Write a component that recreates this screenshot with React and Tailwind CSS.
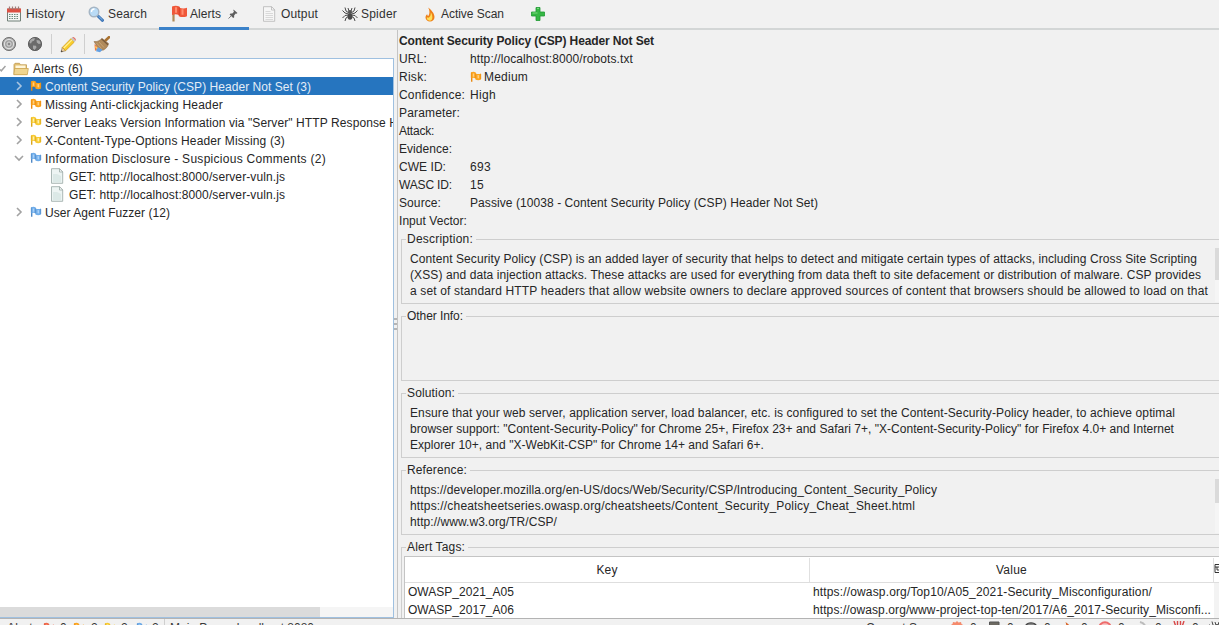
import React, { useLayoutEffect, useRef } from "react";

// Text stretched or tightened to a known width through letter spacing.
function T({ w, className = "", children }) {
  const ref = useRef(null);
  useLayoutEffect(() => {
    const el = ref.current;
    el.style.letterSpacing = "0px";
    const n = el.textContent.length;
    el.style.letterSpacing = (w - el.getBoundingClientRect().width) / n + "px";
  }, [w]);
  return <span ref={ref} className={"inline-block shrink-0 whitespace-pre " + className}>{children}</span>;
}

function Flag({ c, d, l, className = "h-3 w-3" }) {
  return (
    <svg viewBox="0 0 12 12" className={"shrink-0 " + className}>
      <path d="M1.700 1.500v9.300" stroke={d} strokeWidth="1.400" />
      <path d="M1 1.500c1.600-.9 3.200-.9 4.800 0v1c1.500.8 3.600.8 5.200 0v6c-1.600 1-4 1-5.600 0V7.300c-1.300-.7-2.900-.7-4.400 0z" fill={c} />
      <path d="M2.800 2.600c.6-.2 1-.2 1.500 0v3.300c-.5-.2-1-.2-1.500 0zM7.500 4.100c.6.1 1.100.1 1.600 0v3.200c-.5.1-1 .1-1.600 0z" fill={l} />
      <path d="M5.400 2.400v5M1.300 1.700v5M10.700 3v5" stroke={d} strokeWidth=".7" />
    </svg>
  );
}

function Calendar() {
  return (
    <svg viewBox="0 0 16 16" className="h-4 w-4">
      <path d="M1.500 3h13v12h-13z" fill="#f4f6f5" stroke="#718078" />
      <path d="M1 2.500h14v4H1z" fill="#dc5044" />
      <path d="M3.500.5v3M6.500.5v3M9.500.5v3M12.500.5v3" stroke="#a07a76" strokeWidth="1.200" />
      <path d="M3 8.500h10M3 10.500h10M3 12.500h10" stroke="#6d8a7e" strokeDasharray="1.500 1" strokeWidth="1.100" />
    </svg>
  );
}
function Magnifier() {
  return (
    <svg viewBox="0 0 16 16" className="h-4 w-4">
      <path d="M10 10l4.500 4.300" stroke="#3e76b8" strokeWidth="3" strokeLinecap="round" />
      <path d="M10.500 10.200l4 3.800" stroke="#8bbce6" strokeWidth="1" />
      <circle cx="6" cy="6" r="4.800" fill="#b9dbf6" stroke="#a5b5c4" strokeWidth="1.400" />
      <path d="M3.500 6c0-2 1.500-3 3-3" stroke="#fff" fill="none" strokeWidth="1.300" />
    </svg>
  );
}
function RedFlag() {
  return (
    <svg viewBox="0 0 17 17" className="h-[17px] w-[17px]">
      <path d="M2.500 9v7.500" stroke="#b08a58" strokeWidth="2.200" />
      <path d="M1 1.500c2.500-1 5-1 7.500.1v1.100c2.300 1 5 1 7.500.1v8.400c-2.700 1.200-5.700 1.200-8.200 0V10c-2-1-4.300-1-6.800 0z" fill="#f0583a" />
      <path d="M5 2.300v5.500M11.500 4.300v5.500" stroke="#ff8e70" strokeWidth="2" />
      <path d="M8.200 2v8.500" stroke="#d23c22" strokeWidth=".9" />
    </svg>
  );
}
function Pin() {
  return (
    <svg viewBox="0 0 10 10" className="h-[10px] w-[10px]">
      <path d="M5.500.5l4 3.500-1 .8-.8-.2-1.600 1.900.1 1.700-1 .8L1.600 5.500l.9-1 1.800.1L6 2.800l-.6-1z" fill="#5d5d5d" />
      <path d="M3.500 6.600L.5 9.500" stroke="#777" />
    </svg>
  );
}
function Doc({ lines }) {
  return (
    <svg viewBox="0 0 14 16" className="h-4 w-[14px]">
      <path d="M1.500.7h8L12.700 4v11.300H1.500z" fill={lines ? "#f6f6f6" : "#edf4f3"} stroke={lines ? "#bcbcbc" : "#a3b0ae"} strokeWidth=".9" />
      <path d="M9.500.7V4h3.200z" fill="#fff" stroke={lines ? "#b8b8b8" : "#9aa9a6"} strokeWidth=".8" />
      {lines ? (
        <path d="M3.500 5.500h5M3.500 7.500h7.500M3.500 9.500h7.500M3.500 11.500h7.500M3.500 13.500h7.500" stroke="#d2d2d2" strokeWidth=".8" />
      ) : (
        <path d="M3 6h4l4 2v6H3z" fill="#dce9e7" />
      )}
    </svg>
  );
}
function Spider() {
  return (
    <svg viewBox="0 0 16 16" className="h-4 w-4">
      <g fill="none" stroke="#4a4a4a" strokeWidth="1">
        <path d="M7 7L4 5 3 1.500M9 7l3-2 1-3.500M6.500 8L3 7 .5 4.500M9.500 8L13 7l2.500-2.500M6.500 9L3 9.500.5 12M9.500 9l3.500.5 2.500 2.500M7 10l-3 2-1 3M9 10l3 2 1 3M7 5L6 2M9 5l1-3" />
      </g>
      <ellipse cx="8" cy="10.500" rx="2.400" ry="3.300" fill="#4a4a4a" />
      <circle cx="8" cy="6" r="2" fill="#555" />
    </svg>
  );
}
function Flame() {
  return (
    <svg viewBox="0 0 10 15" className="h-[15px] w-[10px]">
      <path d="M3.200.5C6.500 3 9.500 6.500 9.500 10c0 2.800-2 4.500-4.500 4.500S.5 12.800.5 10.500c0-1.600.8-2.600 1.800-3.300 0 1 .3 1.600 1 1.800C5 6.500 4.800 3.500 3.200.5z" fill="#ee8018" />
      <path d="M5.800 5.500c2 2.500 2.500 8-.9 8.200-2.400.1-3.500-1.700-3-3.400.8.600 1.900.7 2.600-.2.900-1.100 1.400-2.500 1.300-4.600z" fill="#ffdf5a" />
    </svg>
  );
}
function Plus() {
  return (
    <svg viewBox="0 0 14 14" className="h-[14px] w-[14px]">
      <path d="M5 .5h4V5h4.500v4H9v4.500H5V9H.5V5H5z" fill="#36b744" stroke="#209a34" strokeWidth=".8" />
      <path d="M6 1.500h2M1.500 6h5" stroke="#7bdc7f" />
    </svg>
  );
}
function Target() {
  return (
    <svg viewBox="0 0 16 16" className="h-4 w-4">
      <circle cx="8" cy="8" r="6.600" fill="#a3a3a3" stroke="#767676" />
      <circle cx="8" cy="8" r="4.600" fill="none" stroke="#e0e0e0" strokeWidth="1.100" />
      <circle cx="8" cy="8" r="2" fill="#8a8a8a" stroke="#dcdcdc" />
    </svg>
  );
}
function Globe() {
  return (
    <svg viewBox="0 0 16 16" className="h-4 w-4">
      <circle cx="8" cy="8" r="6.600" fill="#6b6b6b" stroke="#5f5f5f" />
      <path d="M3 4.500c1.500-2 3.500-2.500 5-2l-1 2.300-2 .7-1 2-1.500-.5zM9.500 4l3 .5 1.300 3-2 .5-2-1.500zM6 9.500l3 .3.500 1.700-2 2.500-1.500-1.500z" fill="#a9a9a9" />
    </svg>
  );
}
function Pencil() {
  return (
    <svg viewBox="0 0 17 17" className="h-[17px] w-[17px]">
      <path d="M1 16l1.300-4.600 3.300 3.300z" fill="#f1d0a0" stroke="#5e4b2f" strokeWidth=".5" />
      <path d="M1 16l.5-1.700 1.300 1.200z" fill="#333" />
      <path d="M2.300 11.400L11 2.600 14.400 6l-8.800 8.700z" fill="#f8cd2b" stroke="#cf981c" strokeWidth=".7" />
      <path d="M3.800 12L12 3.800" stroke="#fff09a" strokeWidth="1.200" />
      <path d="M11 2.600l1.300-1.300L15.700 4.700 14.400 6z" fill="#c6c6c6" />
      <path d="M12.300 1.300c1-1.300 4.500 1.800 3.400 3.400z" fill="#e0746b" />
    </svg>
  );
}
function Broom() {
  return (
    <svg viewBox="0 0 17 17" className="h-[17px] w-[17px]">
      <path d="M12 5l4-3.800" stroke="#a9712f" strokeWidth="2.600" strokeLinecap="round" />
      <path d="M1 5.500c3 .5 5.500-.7 8-3l6.500 5c-.5 3-2 4.700-5 6.500l-4 .5z" fill="#b08a5b" stroke="#96714a" strokeWidth=".6" />
      <path d="M8.500 2.700l6.500 6" stroke="#76583a" strokeWidth="1.200" />
      <path d="M3.500 7l5 5.500M6 6l5 5.500" stroke="#cfac7c" strokeWidth=".8" />
      <path d="M1.500 8l4.500 4-4 3z" fill="#ee7a44" />
      <path d="M4.500 11l5 2.800-2.500 2.400-4-1z" fill="#63a0e2" />
      <path d="M2.300 10.500l2 2" stroke="#ffd25e" strokeWidth="1.200" />
    </svg>
  );
}
function Folder() {
  return (
    <svg viewBox="0 0 16 14" className="h-[14px] w-4">
      <path d="M1 12.500V2.500l1-1.200h4.500l1 1.500h6v9.700z" fill="#e2bf72" stroke="#c09a50" strokeWidth=".8" />
      <path d="M2.500 3.500h10v3h-10z" fill="#fff6da" />
      <path d="M.8 12.700L1.600 6.500h13.700l-1 6.200z" fill="#f0d58f" stroke="#cba552" strokeWidth=".8" />
    </svg>
  );
}
function Chevron({ open, light }) {
  return (
    <svg viewBox="0 0 10 10" className="h-[10px] w-[10px] shrink-0">
      <path d={open ? "M1 3l4 4 4-4" : "M3 1l4 4-4 4"} fill="none" stroke={light ? "#a9c4e0" : "#a2a2a2"} strokeWidth="1.600" />
    </svg>
  );
}

const orange = { c: "#fba41f", d: "#ea8a12", l: "#ffd083" };
const yellow = { c: "#f8cb32", d: "#d9a51e", l: "#fff0ae" };
const blue = { c: "#6fadea", d: "#5088c4", l: "#abd2f8" };
const red = { c: "#f0694c", d: "#d9543a", l: "#ff9a80" };

function Alert({ flag, w, open, sel, children }) {
  return (
    <div className={"flex h-[18px] shrink-0 items-center pl-[14px] " + (sel ? "bg-[#2675bf] text-[#e4edf7]" : "")}>
      <Chevron open={open} light={sel} />
      <Flag {...flag} className="ml-[6px] h-3 w-3" />
      <T w={w} className="ml-[3px] pt-px">{children}</T>
    </div>
  );
}
function Child() {
  return (
    <div className="flex h-[18px] shrink-0 items-center pl-[50px]">
      <Doc />
      <T w={216} className="ml-[5px] pt-px">GET: http://localhost:8000/server-vuln.js</T>
    </div>
  );
}

function Row({ label, w, children }) {
  return (
    <div className="flex h-[18px] items-center">
      <div className="w-[71px] shrink-0"><T w={w}>{label}</T></div>
      {children}
    </div>
  );
}

function Legend({ w, children }) {
  return (
    <div className="flex h-[18px] items-center">
      <div className="h-[9px] w-[5px] self-end border-l border-t border-[#cecece]" />
      <T w={w} className="ml-[1px]">{children}</T>
      <div className="ml-[3px] mt-[1px] h-px flex-1 bg-[#cecece]" />
    </div>
  );
}

function Group({ title, w, thumb, children }) {
  return (
    <section className="mb-[1px] h-[76px] w-[818px] shrink-0">
      <Legend w={w}>{title}</Legend>
      <div className="flex h-[56px] border-b border-l border-[#cecece]">
        <div className="flex-1 pl-[8px] pt-[3px] leading-4">{children}</div>
        {thumb && (
          <div className="h-[54px] w-1 bg-[#f5f5f5]">
            <div className={"w-1 bg-[#dadada] " + thumb} />
          </div>
        )}
      </div>
    </section>
  );
}

function Line({ w, children }) {
  return <div className="h-4 w-[790px]"><T w={w}>{children}</T></div>;
}

const scans = [
  <path d="M7 0l1.500 1.500L11 1l.5 2L14 4.500 13 7l1 2.500-2.500 1.500-.5 2-2.500-.5L7 14l-1.500-1.500L3 13l-.5-2L0 9.500 1 7 0 4.500 2.500 3 3 1l2.500.5z" fill="#f58a6c" />,
  <path d="M2.500 1h9.500v13H2.500z" fill="#6d6a62" stroke="#555" />,
  <path d="M1 6c2-5.500 10-5.500 12 0-2 5-10 5-12 0z" fill="#8a8a8a" stroke="#444" strokeWidth="1.400" />,
  <path d="M4.500 1c4 2.500 6 5.500 5.500 9-1 4-7 3.500-7 0 2-2.500 3-5 1.500-9z" fill="#d8652a" />,
  <circle cx="7" cy="7" r="5.800" fill="#f7c4c4" stroke="#ee6b6b" strokeWidth="2" />,
  <path d="M5 1c4 1 6 4 5.500 8" stroke="#bcbcbc" strokeWidth="2" fill="none" />,
  <path d="M2 0l2 6M12 0l-2 6M5.500 0v6M8.500 0v6M4 8h6v5H4z" stroke="#d84848" strokeWidth="1.400" fill="#d84848" />,
];

export default function App() {
  return (
    <div className="flex h-[625px] w-[1219px] flex-col overflow-hidden bg-[#f1f1f1] font-['Liberation_Sans',Arial,sans-serif] text-[12px] leading-[18px] text-[#262626]">
      <nav className="flex h-[30px] shrink-0 border-b-2 border-[#d3d6d6] text-[#303030]">
        <div className="flex w-[80px] items-center pl-[6px]"><Calendar /><T w={39} className="ml-[4px]">History</T></div>
        <div className="flex w-[79px] items-center pl-[8px]"><Magnifier /><T w={39} className="ml-[4px]">Search</T></div>
        <div className="flex h-[30px] w-[90px] items-center border-b-[3px] border-[#3b82c9] pl-[12px]"><RedFlag /><T w={31} className="ml-[2px]">Alerts</T><span className="ml-[7px]"><Pin /></span></div>
        <div className="flex w-[80px] items-center pl-[13px]"><Doc lines /><T w={37} className="ml-[5px]">Output</T></div>
        <div className="flex w-[84px] items-center pl-[13px]"><Spider /><T w={36} className="ml-[3px]">Spider</T></div>
        <div className="flex w-[104px] items-center pl-[12px]"><Flame /><T w={63} className="ml-[6px]">Active Scan</T></div>
        <div className="flex items-center pl-[14px]"><Plus /></div>
      </nav>

      <div className="flex h-[588px] shrink-0">
        <div className="flex w-[394px] shrink-0 flex-col">
          <div className="flex h-[28px] shrink-0 items-center pl-[1px]">
            <Target />
            <span className="ml-[10px]"><Globe /></span>
            <i className="ml-[8px] h-5 w-px bg-[#cfcfcf]" />
            <span className="ml-[8px]"><Pencil /></span>
            <i className="ml-[7px] h-5 w-px bg-[#cfcfcf]" />
            <span className="ml-[8px]"><Broom /></span>
          </div>
          <div className="flex min-h-0 flex-1 flex-col overflow-hidden border-y border-r border-[#9fc0e0] bg-white">
            <div className="flex h-[18px] shrink-0 items-center pt-px">
              <svg viewBox="0 0 6 10" className="h-[10px] w-[6px]"><path d="M0 5.500l1.300 1.300L5.500 2" fill="none" stroke="#a2a2a2" strokeWidth="1.500" /></svg>
              <span className="ml-[7px]"><Folder /></span>
              <T w={50} className="ml-[4px]">Alerts (6)</T>
            </div>
            <Alert sel flag={orange} w={266}>Content Security Policy (CSP) Header Not Set (3)</Alert>
            <Alert flag={orange} w={178}>Missing Anti-clickjacking Header</Alert>
            <Alert flag={yellow} w={353}>Server Leaks Version Information via "Server" HTTP Response H</Alert>
            <Alert flag={yellow} w={240}>X-Content-Type-Options Header Missing (3)</Alert>
            <Alert open flag={blue} w={281}>Information Disclosure - Suspicious Comments (2)</Alert>
            <Child />
            <Child />
            <Alert flag={blue} w={125}>User Agent Fuzzer (12)</Alert>
            <div className="mt-auto h-[10px] shrink-0 bg-[#f5f5f5]"><div className="h-full w-[320px] bg-[#dbdbdb]" /></div>
          </div>
        </div>

        <div className="flex w-[3px] shrink-0 flex-col items-center justify-center gap-[3px]">
          <i className="h-[2px] w-[3px] bg-[#b5b5b5]" />
          <i className="h-[2px] w-[3px] bg-[#b5b5b5]" />
          <i className="h-[2px] w-[3px] bg-[#b5b5b5]" />
        </div>

        <main className="flex min-w-0 flex-1 flex-col overflow-hidden border-l border-[#c4c4c4] pl-px pt-[2px]">
          <div className="h-[198px] shrink-0">
            <div className="h-[18px] font-bold"><T w={255}>Content Security Policy (CSP) Header Not Set</T></div>
            <Row label="URL:" w={28}><T w={163}>http://localhost:8000/robots.txt</T></Row>
            <Row label="Risk:" w={28}><Flag {...orange} className="h-3 w-3" /><T w={44} className="ml-[2px]">Medium</T></Row>
            <Row label="Confidence:" w={66}><T w={26}>High</T></Row>
            <Row label="Parameter:" w={61} />
            <Row label="Attack:" w={35} />
            <Row label="Evidence:" w={53} />
            <Row label="CWE ID:" w={47}><T w={21}>693</T></Row>
            <Row label="WASC ID:" w={53}><T w={14}>15</T></Row>
            <Row label="Source:" w={42}><T w={348}>Passive (10038 - Content Security Policy (CSP) Header Not Set)</T></Row>
            <Row label="Input Vector:" w={68} />
          </div>
          <div className="flex flex-col pl-[2px]">
            <Group title="Description:" w={66} thumb="mt-0 h-8">
              <Line w={787}>Content Security Policy (CSP) is an added layer of security that helps to detect and mitigate certain types of attacks, including Cross Site Scripting</Line>
              <Line w={791}>(XSS) and data injection attacks. These attacks are used for everything from data theft to site defacement or distribution of malware. CSP provides</Line>
              <Line w={798}>a set of standard HTTP headers that allow website owners to declare approved sources of content that browsers should be allowed to load on that</Line>
            </Group>
            <Group title="Other Info:" w={56} />
            <Group title="Solution:" w={48}>
              <Line w={765}>Ensure that your web server, application server, load balancer, etc. is configured to set the Content-Security-Policy header, to achieve optimal</Line>
              <Line w={764}>browser support: "Content-Security-Policy" for Chrome 25+, Firefox 23+ and Safari 7+, "X-Content-Security-Policy" for Firefox 4.0+ and Internet</Line>
              <Line w={354}>Explorer 10+, and "X-WebKit-CSP" for Chrome 14+ and Safari 6+.</Line>
            </Group>
            <Group title="Reference:" w={60} thumb="mt-0 h-6">
              <Line w={527}>https://developer.mozilla.org/en-US/docs/Web/Security/CSP/Introducing_Content_Security_Policy</Line>
              <Line w={505}>https://cheatsheetseries.owasp.org/cheatsheets/Content_Security_Policy_Cheat_Sheet.html</Line>
              <Line w={147}>http://www.w3.org/TR/CSP/</Line>
            </Group>
            <section className="h-[80px]">
              <Legend w={58}>Alert Tags:</Legend>
              <div className="flex h-[62px] border-l border-[#cecece] pl-[2px]">
                <div className="flex flex-1 flex-col border-l border-t border-[#c4c4c4] bg-white">
                  <div className="flex h-[26px] shrink-0 border-b border-[#dedede] pt-px">
                    <div className="flex w-[405px] items-center justify-center border-r border-[#e0e0e0]"><T w={21}>Key</T></div>
                    <div className="flex w-[404px] items-center justify-center border-r border-[#e0e0e0]"><T w={31}>Value</T></div>
                    <svg viewBox="0 0 5 12" className="mt-[5px] h-3 w-[5px]"><path d="M5 1.500H1v8h4M1 4h4M3 4v3h2" fill="none" stroke="#333" /></svg>
                  </div>
                  <div className="flex">
                    <div className="w-[405px] pl-[3px]">
                      <div className="h-[18px]"><T w={106}>OWASP_2021_A05</T></div>
                      <div className="h-[18px]"><T w={106}>OWASP_2017_A06</T></div>
                    </div>
                    <div className="w-[404px] pl-[3px]">
                      <div className="h-[18px]"><T w={339}>https://owasp.org/Top10/A05_2021-Security_Misconfiguration/</T></div>
                      <div className="h-[18px]"><T w={398}>https://owasp.org/www-project-top-ten/2017/A6_2017-Security_Misconfi...</T></div>
                    </div>
                    <div className="h-9 flex-1 bg-[#f3f3f3]" />
                  </div>
                </div>
              </div>
            </section>
          </div>
        </main>
      </div>

      <footer className="flex h-[7px] shrink-0 items-start overflow-hidden border-t border-[#b3b3b3] text-[#3a3a3a]">
        <div className="flex h-[18px] w-[165px] shrink-0 items-start border-r border-[#cfcfcf] pl-[7px]">
          <T w={32}>Alerts</T>
          <Flag {...red} className="ml-[4px] mt-[3px] h-3 w-3" /><T w={7} className="ml-[5px]">0</T>
          <Flag {...orange} className="ml-[6px] mt-[3px] h-3 w-3" /><T w={7} className="ml-[6px]">2</T>
          <Flag {...yellow} className="ml-[6px] mt-[3px] h-3 w-3" /><T w={7} className="ml-[5px]">2</T>
          <Flag {...blue} className="ml-[8px] mt-[3px] h-3 w-3" /><T w={7} className="ml-[4px]">2</T>
        </div>
        <div className="h-[18px] flex-1 pl-[5px]"><T w={144}>Main Proxy: localhost:8080</T></div>
        <div className="flex h-[18px] items-start">
          <div className="w-[80px]"><T w={76}>Current Scans</T></div>
          {scans.map((shape, i) => (
            <div key={i} className="flex w-[37px] shrink-0 items-start pl-[4px]">
              <svg viewBox="0 0 14 14" className="mt-[2px] h-[14px] w-[14px]">{shape}</svg>
              <T w={7} className="ml-[6px]">0</T>
            </div>
          ))}
          <div className="w-[14px] pl-[4px] pt-[1px]"><Spider /></div>
        </div>
      </footer>
    </div>
  );
}
